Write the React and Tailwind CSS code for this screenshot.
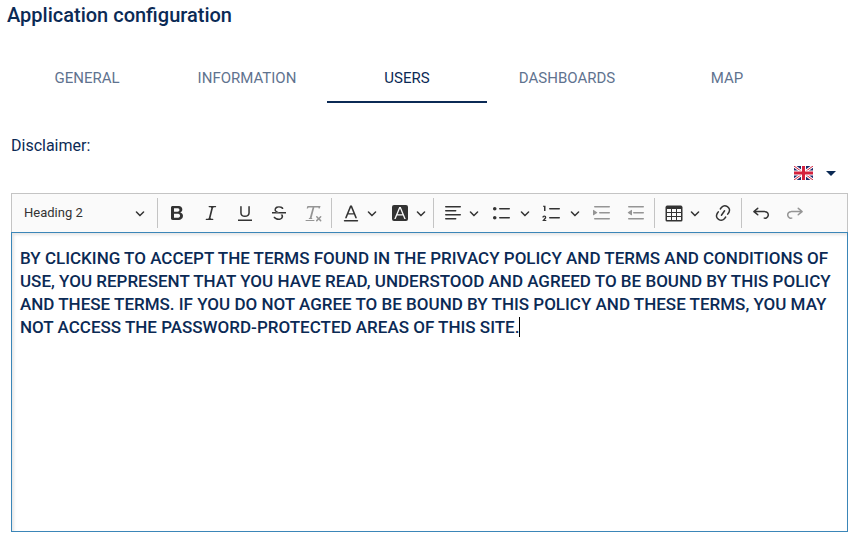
import { useState } from "react";

const ICONS = {
  bold: "M10.187 17H5.773c-.637 0-1.092-.138-1.364-.415-.273-.277-.409-.718-.409-1.323V4.738c0-.617.14-1.062.419-1.332.279-.27.73-.406 1.354-.406h4.68c.69 0 1.288.041 1.793.124.506.083.96.242 1.36.478.341.197.644.447.906.75a3.262 3.262 0 0 1 .808 2.162c0 1.401-.722 2.426-2.167 3.075C15.05 10.175 16 11.315 16 13.01a3.756 3.756 0 0 1-2.296 3.504 6.1 6.1 0 0 1-1.517.377c-.571.073-1.238.11-2 .11zm-.217-6.217H7v4.087h3.069c1.977 0 2.965-.69 2.965-2.072 0-.707-.256-1.22-.768-1.537-.512-.319-1.277-.478-2.296-.478zM7 5.13v3.619h2.606c.729 0 1.292-.067 1.69-.2a1.6 1.6 0 0 0 .91-.765c.165-.267.247-.566.247-.897 0-.707-.26-1.176-.778-1.409-.519-.232-1.31-.348-2.375-.348H7z",
  italic: "m9.586 14.633.021.004c-.036.335.095.655.393.962.082.083.173.15.274.201h1.474a.6.6 0 1 1 0 1.2H5.304a.6.6 0 0 1 0-1.2h1.15c.474-.07.809-.182 1.005-.334.157-.122.291-.32.404-.597l2.416-9.55a1.053 1.053 0 0 0-.281-.823 1.12 1.12 0 0 0-.442-.296H8.15a.6.6 0 0 1 0-1.2h6.443a.6.6 0 1 1 0 1.2h-1.195c-.376.056-.65.155-.823.296-.215.175-.423.439-.623.79l-2.366 9.347z",
  underline: "M3 18v-1.5h14V18zm2.2-8V3.6c0-.4.4-.6.8-.6.3 0 .7.2.7.6v6.2c0 2 1.3 2.8 3.2 2.8 1.9 0 3.4-.9 3.4-2.9V3.6c0-.3.4-.5.8-.5.3 0 .7.2.7.5V10c0 2.7-2.2 4-4.9 4-2.6 0-4.7-1.2-4.7-4z",
  strike: "M7 16.4c-.8-.4-1.5-.9-2.2-1.5a.6.6 0 0 1-.2-.5l.3-.6h1c1 1.2 2.1 1.7 3.7 1.7 1 0 1.8-.3 2.3-.6.6-.4.6-1.2.6-1.3.2-1.2-.9-2.1-.9-2.1h2.1c.3.7.4 1.2.4 1.7v.8l-.6 1.2c-.6.8-1.1 1-1.6 1.2a6 6 0 0 1-2.4.6c-1 0-1.8-.3-2.5-.6zM6.8 9L6 8.3c-.4-.5-.5-.8-.5-1.6 0-.7.1-1.3.5-1.8.4-.6 1-1 1.6-1.3a6.3 6.3 0 0 1 4.7 0 4 4 0 0 1 1.7 1l.3.7c0 .1.2.4-.2.7-.4.2-.9.1-1 0a3 3 0 0 0-1.2-1c-.4-.2-1-.3-2-.4-.7 0-1.4.2-2 .6-.8.6-1 .8-1 1.5 0 .8.5 1 1.2 1.5.6.4 1.1.7 1.9 1H6.8zM3 10.5V9h14v1.5z",
  removeFormat: "M8.69 14.915c.053.052.173.083.36.093a.366.366 0 0 1 .345.485l-.003.01a.738.738 0 0 1-.697.497h-2.67a.374.374 0 0 1-.353-.496l.013-.038a.681.681 0 0 1 .644-.458c.197-.012.325-.043.386-.093a.28.28 0 0 0 .072-.11L9.592 4.5H6.269c-.359-.017-.609.013-.75.09-.142.078-.289.265-.442.563-.192.29-.516.464-.864.464H4.17a.43.43 0 0 1-.407-.569L4.46 3h13.08l-.62 2.043a.81.81 0 0 1-.775.574h-.114a.486.486 0 0 1-.486-.486c.001-.284-.054-.464-.167-.54-.112-.076-.367-.106-.766-.091h-3.28l-2.68 10.257c-.006.074.007.127.038.158zM3 17h8a.5.5 0 1 1 0 1H3a.5.5 0 1 1 0-1zm11.299 1.17a.75.75 0 1 1-1.06-1.06l1.414-1.415-1.415-1.414a.75.75 0 0 1 1.06-1.06l1.415 1.414 1.414-1.415a.75.75 0 1 1 1.06 1.06l-1.413 1.415 1.414 1.415a.75.75 0 0 1-1.06 1.06l-1.415-1.414-1.414 1.414z",
  fontColor: "M12.4 10.3 10 4.5l-2.4 5.8h4.8zm.5 1.2H7.1L5.7 15a.8.8 0 0 1-1.5-.5l4.9-11.9h1.8l4.9 11.9a.8.8 0 0 1-1.5.5l-1.4-3.5zm3.6 6.9h-13a.7.7 0 0 1 0-1.4h13a.7.7 0 0 1 0 1.4z",
  background: "M4 2h12a2 2 0 0 1 2 2v12a2 2 0 0 1-2 2H4a2 2 0 0 1-2-2V4a2 2 0 0 1 2-2zm8.38 9.262H7.62L10 5.506l2.38 5.756zm.532 1.285L14.34 16h1.426L10.804 4H9.196L4.234 16H5.66l1.428-3.453h5.824z",
  alignLeft: "M2 3.75c0 .414.336.75.75.75h14.5a.75.75 0 1 0 0-1.5H2.75a.75.75 0 0 0-.75.75zm0 8c0 .414.336.75.75.75h14.5a.75.75 0 1 0 0-1.5H2.75a.75.75 0 0 0-.75.75zm0 4c0 .414.336.75.75.75h9.929a.75.75 0 1 0 0-1.5H2.75a.75.75 0 0 0-.75.75zm0-8c0 .414.336.75.75.75h9.929a.75.75 0 1 0 0-1.5H2.75a.75.75 0 0 0-.75.75z",
  bulleted: "M7 5.75c0 .414.336.75.75.75h9.5a.75.75 0 1 0 0-1.5h-9.5a.75.75 0 0 0-.75.75zm-6 0C1 4.784 1.777 4 2.75 4c.966 0 1.75.777 1.75 1.75 0 .966-.777 1.75-1.75 1.75C1.784 7.5 1 6.723 1 5.75zm6 9c0 .414.336.75.75.75h9.5a.75.75 0 1 0 0-1.5h-9.5a.75.75 0 0 0-.75.75zm-6 0c0-.966.777-1.75 1.75-1.75.966 0 1.75.777 1.75 1.75 0 .966-.777 1.75-1.75 1.75-.966 0-1.75-.777-1.75-1.75z",
  numbered: "M7 5.75c0 .414.336.75.75.75h9.5a.75.75 0 1 0 0-1.5h-9.5a.75.75 0 0 0-.75.75zM3.5 3v5H2V3.7H1v-1h2.5V3zM.343 17.857l2.59-3.257H2.92a.6.6 0 1 0-1.04 0H.302a2 2 0 1 1 3.995 0h-.001c-.048.405-.16.734-.333.988-.175.254-.59.692-1.244 1.312H4.3v1h-4l.043-.043zM7 14.75a.75.75 0 0 1 .75-.75h9.5a.75.75 0 1 1 0 1.5h-9.5a.75.75 0 0 1-.75-.75z",
  indent: "M2 3.75c0 .414.336.75.75.75h14.5a.75.75 0 1 0 0-1.5H2.75a.75.75 0 0 0-.75.75zm5 6c0 .414.336.75.75.75h9.5a.75.75 0 1 0 0-1.5h-9.5a.75.75 0 0 0-.75.75zM2.75 16.5h14.5a.75.75 0 1 0 0-1.5H2.75a.75.75 0 1 0 0 1.5zM1.632 6.95 5.02 9.358a.4.4 0 0 1-.013.661l-3.39 2.207A.4.4 0 0 1 1 11.892V7.275a.4.4 0 0 1 .632-.326z",
  outdent: "M2 3.75c0 .414.336.75.75.75h14.5a.75.75 0 1 0 0-1.5H2.75a.75.75 0 0 0-.75.75zm5 6c0 .414.336.75.75.75h9.5a.75.75 0 1 0 0-1.5h-9.5a.75.75 0 0 0-.75.75zM2.75 16.5h14.5a.75.75 0 1 0 0-1.5H2.75a.75.75 0 1 0 0 1.5zM5.368 6.95 1.98 9.358a.4.4 0 0 0 .013.661l3.39 2.207A.4.4 0 0 0 6 11.892V7.275a.4.4 0 0 0-.632-.326z",
  table: "M3 6v3h4V6H3zm0 4v3h4v-3H3zm0 4v3h4v-3H3zm5 3h4v-3H8v3zm5 0h4v-3h-4v3zm4-4v-3h-4v3h4zm0-4V6h-4v3h4zm1.5 8a1.5 1.5 0 0 1-1.5 1.5H3A1.5 1.5 0 0 1 1.5 17V4c.222-.863 1.068-1.5 2-1.5h13c.932 0 1.778.637 2 1.5v13zM12 13v-3H8v3h4zm0-4V6H8v3h4z",
  link: "m11.077 15 .991-1.416a.75.75 0 1 1 1.229.86l-1.148 1.64a.748.748 0 0 1-.217.206 5.251 5.251 0 0 1-8.503-5.955.741.741 0 0 1 .12-.274l1.147-1.639a.75.75 0 1 1 1.228.86L4.933 10.7l.006.003a3.75 3.75 0 0 0 6.132 4.294l.006.004zm5.494-5.335a.748.748 0 0 1-.12.274l-1.147 1.639a.75.75 0 1 1-1.228-.86l.86-1.23a3.75 3.75 0 0 0-6.144-4.301l-.86 1.229a.75.75 0 0 1-1.229-.86l1.148-1.64a.748.748 0 0 1 .217-.206 5.251 5.251 0 0 1 8.503 5.955zm-4.563-2.532a.75.75 0 0 1 .184 1.045l-3.155 4.505a.75.75 0 1 1-1.229-.86l3.155-4.506a.75.75 0 0 1 1.045-.184z",
  undo: "m5.042 9.367 2.189 1.837a.75.75 0 0 1-.965 1.149l-3.788-3.18a.747.747 0 0 1-.21-.284.75.75 0 0 1 .17-.945L6.23 4.762a.75.75 0 1 1 .964 1.15L4.863 7.866h8.917A.75.75 0 0 1 14 7.9a4 4 0 1 1-1.477 7.718l.344-1.489a2.5 2.5 0 1 0 1.094-4.73l.008-.032H5.042z",
  redo: "m14.958 9.367-2.189 1.837a.75.75 0 0 0 .965 1.149l3.788-3.18a.747.747 0 0 0 .21-.284.75.75 0 0 0-.17-.945L13.77 4.762a.75.75 0 1 0-.964 1.15l2.331 1.955H6.22A.75.75 0 0 0 6 7.9a4 4 0 1 0 1.477 7.718l-.344-1.489A2.5 2.5 0 1 1 6.039 9.4l-.008-.032h8.919z",
};

const TABS = ["GENERAL", "INFORMATION", "USERS", "DASHBOARDS", "MAP"];

const DISCLAIMER =
  "BY CLICKING TO ACCEPT THE TERMS FOUND IN THE PRIVACY POLICY AND TERMS AND CONDITIONS OF USE, YOU REPRESENT THAT YOU HAVE READ, UNDERSTOOD AND AGREED TO BE BOUND BY THIS POLICY AND THESE TERMS. IF YOU DO NOT AGREE TO BE BOUND BY THIS POLICY AND THESE TERMS, YOU MAY NOT ACCESS THE PASSWORD-PROTECTED AREAS OF THIS SITE.";

function Icon({ name }) {
  return (
    <svg viewBox="0 0 20 20" className="size-5 shrink-0 fill-current" fillRule="evenodd" aria-hidden="true">
      <path d={ICONS[name]} />
    </svg>
  );
}

function Chevron({ className = "" }) {
  return (
    <svg viewBox="0 0 10 10" className={`size-[10px] shrink-0 fill-[#333333] ${className}`} aria-hidden="true">
      <path d="M.941 4.523a.75.75 0 1 1 1.06-1.06l3.006 3.005 3.005-3.005a.75.75 0 1 1 1.06 1.06l-3.549 3.55a.75.75 0 0 1-1.168-.136L.941 4.523z" />
    </svg>
  );
}

function Tool({ icon, label, disabled = false }) {
  return (
    <button
      type="button"
      aria-label={label}
      disabled={disabled}
      className="flex size-[30px] shrink-0 items-center justify-center rounded-xs disabled:opacity-50"
    >
      <Icon name={icon} />
    </button>
  );
}

function DropTool({ icon, label }) {
  return (
    <button
      type="button"
      aria-label={label}
      aria-haspopup="menu"
      className="flex h-[30px] w-[45px] shrink-0 items-center justify-between rounded-xs pr-1 pl-[5px]"
    >
      <Icon name={icon} />
      <Chevron />
    </button>
  );
}

function SplitTool({ icon, label }) {
  return (
    <div className="flex shrink-0">
      <Tool icon={icon} label={label} />
      <button
        type="button"
        aria-label={`${label} styles`}
        className="flex h-[30px] w-4 items-center justify-center"
      >
        <Chevron />
      </button>
    </div>
  );
}

function Separator() {
  return <span className="-ml-px h-[30px] w-px shrink-0 bg-[#c4c4c4]" />;
}

function Flag() {
  return (
    <svg viewBox="0 0 19 14" className="h-[14px] w-[19px]" aria-hidden="true">
      <rect width="19" height="14" fill="#1f2a6b" />
      <path d="M0 0l19 14M19 0L0 14" stroke="#ffffff" strokeWidth="3" />
      <path d="M0 0l19 14M19 0L0 14" stroke="#d4213d" strokeWidth="1" />
      <path d="M9.5 0v14M0 7h19" stroke="#ffffff" strokeWidth="5" />
      <path d="M9.5 0v14M0 7h19" stroke="#d4213d" strokeWidth="3" />
    </svg>
  );
}

export default function App() {
  const [active, setActive] = useState("USERS");
  const [text, setText] = useState(DISCLAIMER);

  return (
    <main className="bg-white pr-[9px] pb-[9px] pl-[7px] font-[Roboto,sans-serif] text-[#0b2a55]">
      <h1 className="pt-[3px] text-xl leading-6 font-medium">Application configuration</h1>

      <div role="tablist" className="mt-[26px] flex">
        {TABS.map((tab) => (
          <button
            key={tab}
            type="button"
            role="tab"
            aria-selected={tab === active}
            onClick={() => setActive(tab)}
            className="h-[50px] w-40 border-b-2 border-transparent pt-[2px] text-[15px] text-[#5f738f] aria-selected:border-[#0b2a55] aria-selected:text-[#0b2a55]"
          >
            {tab}
          </button>
        ))}
      </div>

      <section className="pl-1">
        <label htmlFor="disclaimer" className="mt-[33px] block text-base leading-5">
          Disclaimer:
        </label>

        <div className="mt-2 flex h-[29px] justify-end pr-3 pb-[11px]">
          <button type="button" aria-label="Language: English" className="flex items-center gap-[13px]">
            <Flag />
            <svg viewBox="0 0 10 5" className="h-[5px] w-[10px]" aria-hidden="true">
              <path d="M0 0h10L5 5z" fill="#0b2a55" />
            </svg>
          </button>
        </div>

        <div className="flex items-center gap-1 border border-b-0 border-[#c4c4c4] bg-[#fafafa] px-1 py-1 text-[#333333]">
          <div className="relative w-[138px] shrink-0">
            <select
              aria-label="Heading"
              defaultValue="Heading 2"
              className="h-[30px] w-full appearance-none bg-transparent pl-2 text-[13px]"
            >
              <option>Paragraph</option>
              <option>Heading 1</option>
              <option>Heading 2</option>
              <option>Heading 3</option>
            </select>
            <Chevron className="pointer-events-none absolute top-[10px] right-[9px]" />
          </div>
          <Separator />
          <Tool icon="bold" label="Bold" />
          <Tool icon="italic" label="Italic" />
          <Tool icon="underline" label="Underline" />
          <Tool icon="strike" label="Strikethrough" />
          <Tool icon="removeFormat" label="Remove format" disabled />
          <Separator />
          <DropTool icon="fontColor" label="Font color" />
          <DropTool icon="background" label="Font background color" />
          <Separator />
          <DropTool icon="alignLeft" label="Text alignment" />
          <SplitTool icon="bulleted" label="Bulleted list" />
          <SplitTool icon="numbered" label="Numbered list" />
          <Tool icon="indent" label="Increase indent" disabled />
          <Tool icon="outdent" label="Decrease indent" disabled />
          <Separator />
          <DropTool icon="table" label="Insert table" />
          <Tool icon="link" label="Link" />
          <Separator />
          <Tool icon="undo" label="Undo" />
          <Tool icon="redo" label="Redo" disabled />
        </div>

        <div className="relative">
          <textarea
            id="disclaimer"
            spellCheck={false}
            value={text}
            onChange={(e) => setText(e.target.value)}
            className="block h-[300px] w-full resize-none border border-[#3b86b8] px-2 py-[14px] text-[17px] leading-[23px] font-medium shadow-[inset_2px_2px_3px_rgba(0,0,0,0.1)] outline-none"
          />
          <span className="absolute top-[85px] left-[508px] h-5 w-px bg-black" />
        </div>
      </section>
    </main>
  );
}
